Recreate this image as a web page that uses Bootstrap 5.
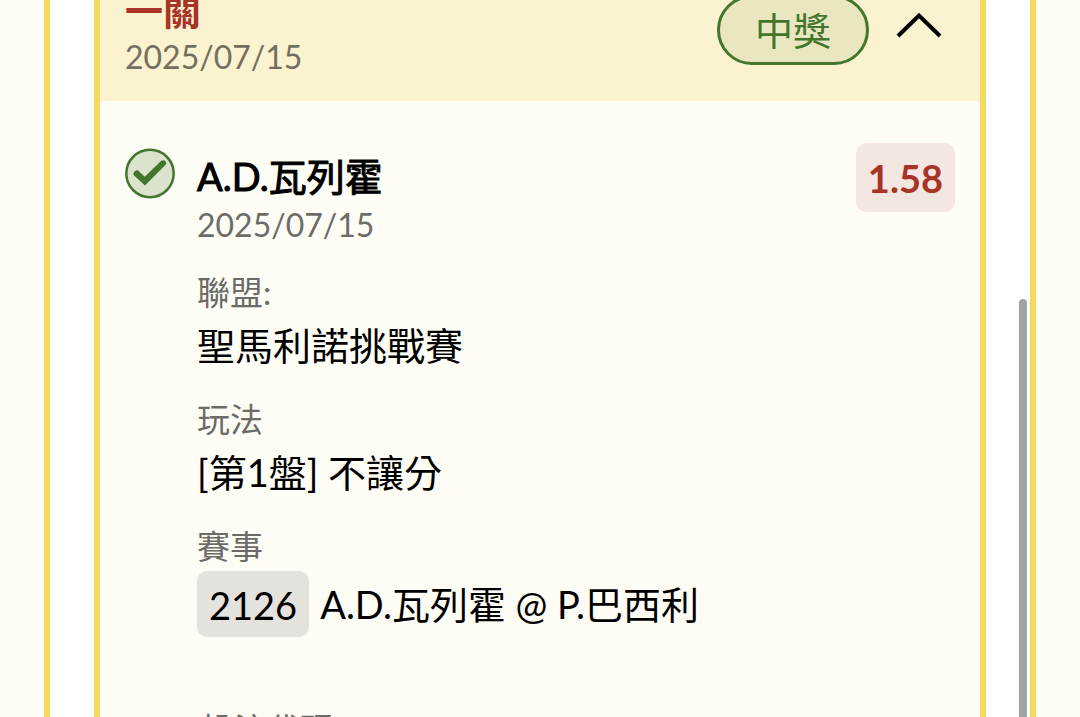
<!DOCTYPE html>
<html lang="zh-Hant">
<head>
<meta charset="utf-8">
<meta name="viewport" content="width=device-width, initial-scale=1">
<title>投注紀錄</title>
<link href="https://cdn.jsdelivr.net/npm/bootstrap@5.3.0/dist/css/bootstrap.min.css" rel="stylesheet">
<style>
  :root { --cream: #fefdf5; --gold: #f3d95c; --brick: #a83428; --leaf: #42762c; }
  body { background: var(--cream); color: #000; font-family: Lato, "Noto Sans CJK TC", sans-serif; font-size: 38px; line-height: 56px; }
  .slip-panel { background: #fff; border: solid var(--gold); border-width: 0 6px; margin: 0 44px; padding: 0 44px; }
  .slip-card { background: var(--cream); border: solid var(--gold); border-width: 0 6px; border-radius: 0; color: #000; min-height: 100%; }
  /* the list is scrolled part of the way down */
  .slip-head { background: #fbf2cf; margin-top: -41px; padding: 24px 38px 24px 25px; }
  .slip-head h2 { color: var(--brick); font-size: 38px; line-height: 54px; font-weight: 700; }
  .note-text { color: #6b6b68; font-size: 33px; line-height: 50px; }
  .date-text { color: #6b6b68; font-size: 32px; line-height: 32px; }
  .slip-head .date-text { color: #736f60; line-height: 40px; }
  .win-pill { border: 3px solid var(--leaf); background: #eae6bf; color: var(--leaf); border-radius: 36px; padding: 6px 35px; line-height: 52px; }
  .slip-actions { gap: 27px; }
  .toggle-btn { line-height: 0; }
  .slip-body { padding: 42px 25px 0; gap: 22px; }
  .pick-name { font-size: 38px; line-height: 66px; -webkit-text-stroke: 1px #000; }
  .odds-tag { background: #f4e7e1; color: var(--brick); border-radius: 10px; font-weight: 700; font-size: 38px; line-height: 67px; padding: 2px 12px 0; height: 69px; }
  .match-row { gap: 11px; }
  .match-no { background: #e3e2dc; border-radius: 10px; padding: 2px 12px 0; line-height: 64px; }
  .fields { margin: 26px 0 0; }
  .fields dd { margin: 0 0 21px; }
  .fields dd.match-row { margin-bottom: 67px; }
  .scroll-thumb { top: 299px; bottom: 0; right: 3px; width: 8px; background: #a3a3a3; border-radius: 4px 4px 0 0; }
</style>
</head>
<body class="vh-100 overflow-hidden">
<main class="slip-panel position-relative vh-100 overflow-hidden">
  <article class="slip-card card">
    <header class="slip-head d-flex justify-content-between">
      <div>
        <h2 class="m-0">一關</h2>
        <div class="date-text">2025/07/15</div>
      </div>
      <div class="slip-actions d-flex align-items-center">
        <span class="win-pill">中獎</span>
        <button type="button" class="toggle-btn btn p-0 border-0" aria-label="收合">
          <svg width="46" height="38" viewBox="0 0 46 38" fill="none" stroke="#000" stroke-width="4"><path d="M2 25 23 4.500l21 20.500"/></svg>
        </button>
      </div>
    </header>
    <div class="slip-body d-flex align-items-start">
      <svg class="flex-shrink-0 mt-1" width="50" height="52" viewBox="0 0 50 52"><circle cx="25" cy="26.500" r="23.700" fill="#dbe3cf" stroke="#42762c" stroke-width="2.500"/><path d="M8.500 27 12.800 23.300 19.800 29.800 36.200 13.800Q41 12 41.300 17L20 38.500 9.300 28.800Q8 27.500 8.500 26Q10 22.500 12.800 23.300" fill="#42762c"/></svg>
      <div class="flex-grow-1">
        <div class="pick-name">A.D.瓦列霍</div>
        <div class="date-text">2025/07/15</div>
        <dl class="fields">
          <dt class="note-text fw-normal">聯盟:</dt>
          <dd>聖馬利諾挑戰賽</dd>
          <dt class="note-text fw-normal">玩法</dt>
          <dd>[第1盤] 不讓分</dd>
          <dt class="note-text fw-normal">賽事</dt>
          <dd class="match-row d-flex align-items-center"><span class="match-no">2126</span><span>A.D.瓦列霍 @ P.巴西利</span></dd>
          <dt class="note-text fw-normal ps-1">投注代碼</dt>
        </dl>
      </div>
      <strong class="odds-tag">1.58</strong>
    </div>
  </article>
  <div class="scroll-thumb position-absolute"></div>
</main>
<script src="https://cdn.jsdelivr.net/npm/bootstrap@5.3.0/dist/js/bootstrap.bundle.min.js"></script>
</body>
</html>
